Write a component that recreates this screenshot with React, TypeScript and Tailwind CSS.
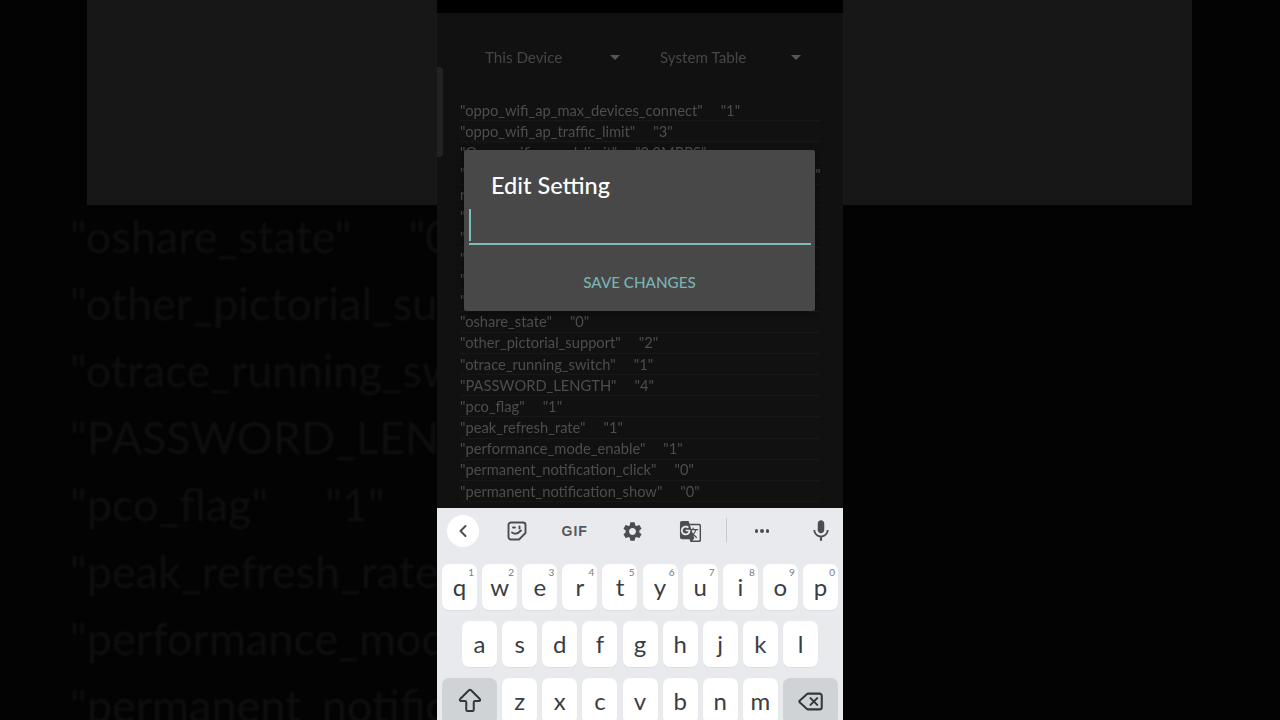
import { ArrowBigUp, ChevronLeft, Delete } from "lucide-react";
import { MdGTranslate, MdMic, MdSettings } from "react-icons/md";

const FONT = "font-['Lato','Noto_Sans',sans-serif]";

const BIG_ROWS: [string, string][] = [
  ['"oshare_state"', '"0"'],
  ['"other_pictorial_support"', ""],
  ['"otrace_running_switch"', ""],
  ['"PASSWORD_LENGTH"', ""],
  ['"pco_flag"', '"1"'],
  ['"peak_refresh_rate"', ""],
  ['"performance_mode_enable"', ""],
  ['"permanent_notification_show"', ""],
];

const ROWS: [string, string][] = [
  ['"oppo_wifi_ap_max_devices_connect"', '"1"'],
  ['"oppo_wifi_ap_traffic_limit"', '"3"'],
  ['"Oppo_wifi_speed_limit"', '"0.0MBPS"'],
  ['"', ""],
  ["r", ""],
  ['"', ""],
  ['"', ""],
  ['"', ""],
  ['"', ""],
  ['"', ""],
  ['"oshare_state"', '"0"'],
  ['"other_pictorial_support"', '"2"'],
  ['"otrace_running_switch"', '"1"'],
  ['"PASSWORD_LENGTH"', '"4"'],
  ['"pco_flag"', '"1"'],
  ['"peak_refresh_rate"', '"1"'],
  ['"performance_mode_enable"', '"1"'],
  ['"permanent_notification_click"', '"0"'],
  ['"permanent_notification_show"', '"0"'],
];

const TOP_KEYS = ["q", "w", "e", "r", "t", "y", "u", "i", "o", "p"];
const MID_KEYS = ["a", "s", "d", "f", "g", "h", "j", "k", "l"];
const LOW_KEYS = ["z", "x", "c", "v", "b", "n", "m"];

function Key({ label, hint }: { label: string; hint?: string }) {
  return (
    <div className="relative flex h-[46px] w-[35px] items-center justify-center rounded-[7px] bg-white pb-px text-[24px] leading-none text-[#3a3d42] shadow-[0_1px_1px_#dcdee1]">
      {label}
      {hint && (
        <span className="absolute right-[3px] top-[3px] text-[10px] leading-none text-[#777a7f]">
          {hint}
        </span>
      )}
    </div>
  );
}

function Dropdown({ label, width }: { label: string; width: string }) {
  return (
    <div className={`flex items-center justify-between ${width}`}>
      <span>{label}</span>
      <span className="h-0 w-0 border-x-[5px] border-t-[5px] border-x-transparent border-t-[#565656]" />
    </div>
  );
}

function StickerIcon() {
  return (
    <svg width="20" height="20" viewBox="0 0 20 20" fill="none" stroke="#4a4d52" strokeWidth="1.9">
      <path d="M4 1.5h12a2.5 2.5 0 0 1 2.5 2.5v8l-6.5 6.500H4A2.500 2.500 0 0 1 1.500 16V4A2.500 2.500 0 0 1 4 1.500z" strokeLinejoin="round" />
      <path d="M5 11.500c2.500 1.800 6 1.200 9-2" strokeLinecap="round" />
      <path d="M6 6.500h2M12.500 5.500v2" strokeLinecap="round" />
    </svg>
  );
}

export default function App() {
  return (
    <div className={`flex h-[720px] w-[1280px] overflow-hidden bg-[#030303] ${FONT}`}>
      <div className="w-[437px] shrink-0 overflow-hidden">
        <div className="ml-[87px] h-[205px] bg-[#171717]" />
        <div className="-mt-[2px] ml-[70px] whitespace-nowrap text-[45px] leading-[67px] text-[#0f0f0f] blur-[1px]">
          {BIG_ROWS.map(([name, value]) => (
            <div key={name} className="flex h-[67px] gap-[57px]">
              <span>{name}</span>
              {value && <span>{value}</span>}
            </div>
          ))}
        </div>
      </div>

      <div className="relative w-[406px] shrink-0">
        <div className="h-[13px] bg-black" />
        <div className="h-[495px] bg-[#111111] pt-[33px] text-[14.700px] text-[#4d4d4d]">
          <div className="flex h-[22px] items-center pl-[48px] pr-[42px] text-[15.200px] text-[#464646] blur-[0.4px]">
            <Dropdown label="This Device" width="w-[135px]" />
            <div className="ml-[40px]">
              <Dropdown label="System Table" width="w-[141px]" />
            </div>
          </div>
          <div className="mt-[32px] px-[23px]">
            {ROWS.map(([name, value], i) => (
              <div
                key={i}
                className="flex h-[21.170px] items-center gap-[18px] whitespace-nowrap border-b border-[#181818] leading-none"
              >
                <span className="blur-[0.4px]">{name}</span>
                {value && <span className="blur-[0.4px]">{value}</span>}
              </div>
            ))}
          </div>
        </div>

        <div className="absolute left-0 top-[67px] h-[90px] w-[6px] rounded-r bg-[#222222]" />
        <span className="absolute left-[378px] top-[163px] text-[15px] text-[#4d4d4d]">"</span>

        <div className="absolute left-[27px] top-[150px] h-[161px] w-[351px] rounded-[2px] bg-[#484848] shadow-[0_2px_6px_rgba(0,0,0,0.5)]">
          <h2 className="pl-[27px] pt-[20px] text-[23.500px] font-medium leading-[30px] text-white">Edit Setting</h2>
          <div className="relative ml-[5px] mr-[4px] mt-[8px] h-[37px] border-b-2 border-[#7fbcb9]">
            <div className="absolute left-0 top-[1px] h-[32px] w-[2px] bg-[#7fbcb9]" />
          </div>
          <div className="mt-[26px] text-center text-[15.200px] font-medium leading-[22px] text-[#79b3b2]">SAVE CHANGES</div>
        </div>

        <div className="h-[212px] overflow-hidden bg-[#e8eaed]">
          <div className="flex h-[56px] items-start pt-[7px] text-[#4a4d52]">
            <div className="ml-[10px] flex h-[32px] w-[32px] items-center justify-center rounded-full bg-white">
              <ChevronLeft size={20} strokeWidth={2.4} />
            </div>
            <div className="ml-[9px] flex h-[32px] w-[58px] items-center justify-center">
              <StickerIcon />
            </div>
            <div className="flex h-[32px] w-[58px] items-center justify-center font-['Liberation_Sans',sans-serif] text-[14px] font-bold tracking-[1px] text-[#55585d]">
              GIF
            </div>
            <div className="flex h-[32px] w-[58px] items-center justify-center">
              <MdSettings size={23} />
            </div>
            <div className="flex h-[32px] w-[58px] items-center justify-center">
              <MdGTranslate size={23} />
            </div>
            <div className="ml-[7px] mt-[3px] h-[24px] w-px bg-[#c9cbce]" />
            <div className="ml-[6px] flex h-[32px] w-[58px] items-center justify-center gap-[2px]">
              <span className="h-[3.500px] w-[3.500px] rounded-full bg-[#4a4d52]" />
              <span className="h-[3.500px] w-[3.500px] rounded-full bg-[#4a4d52]" />
              <span className="h-[3.500px] w-[3.500px] rounded-full bg-[#4a4d52]" />
            </div>
            <div className="ml-[8px] flex h-[32px] w-[44px] items-center justify-center">
              <MdMic size={26} />
            </div>
          </div>

          <div className="flex flex-col gap-[11px]">
            <div className="ml-[5px] flex w-[396px] justify-between">
              {TOP_KEYS.map((k, i) => (
                <Key key={k} label={k} hint={String((i + 1) % 10)} />
              ))}
            </div>
            <div className="ml-[25px] flex w-[356px] justify-between">
              {MID_KEYS.map((k) => (
                <Key key={k} label={k} />
              ))}
            </div>
            <div className="ml-[5px] flex w-[396px] justify-between">
              <div className="flex h-[46px] w-[55px] items-center justify-center rounded-[7px] bg-[#d0d3d6] text-[#33363a]">
                <ArrowBigUp size={30} strokeWidth={1.6} />
              </div>
              {LOW_KEYS.map((k) => (
                <Key key={k} label={k} />
              ))}
              <div className="flex h-[46px] w-[55px] items-center justify-center rounded-[7px] bg-[#d0d3d6] text-[#33363a]">
                <Delete size={27} strokeWidth={1.8} />
              </div>
            </div>
          </div>
        </div>
      </div>

      <div className="w-[437px] shrink-0">
        <div className="mr-[88px] h-[205px] bg-[#171717]" />
      </div>
    </div>
  );
}
